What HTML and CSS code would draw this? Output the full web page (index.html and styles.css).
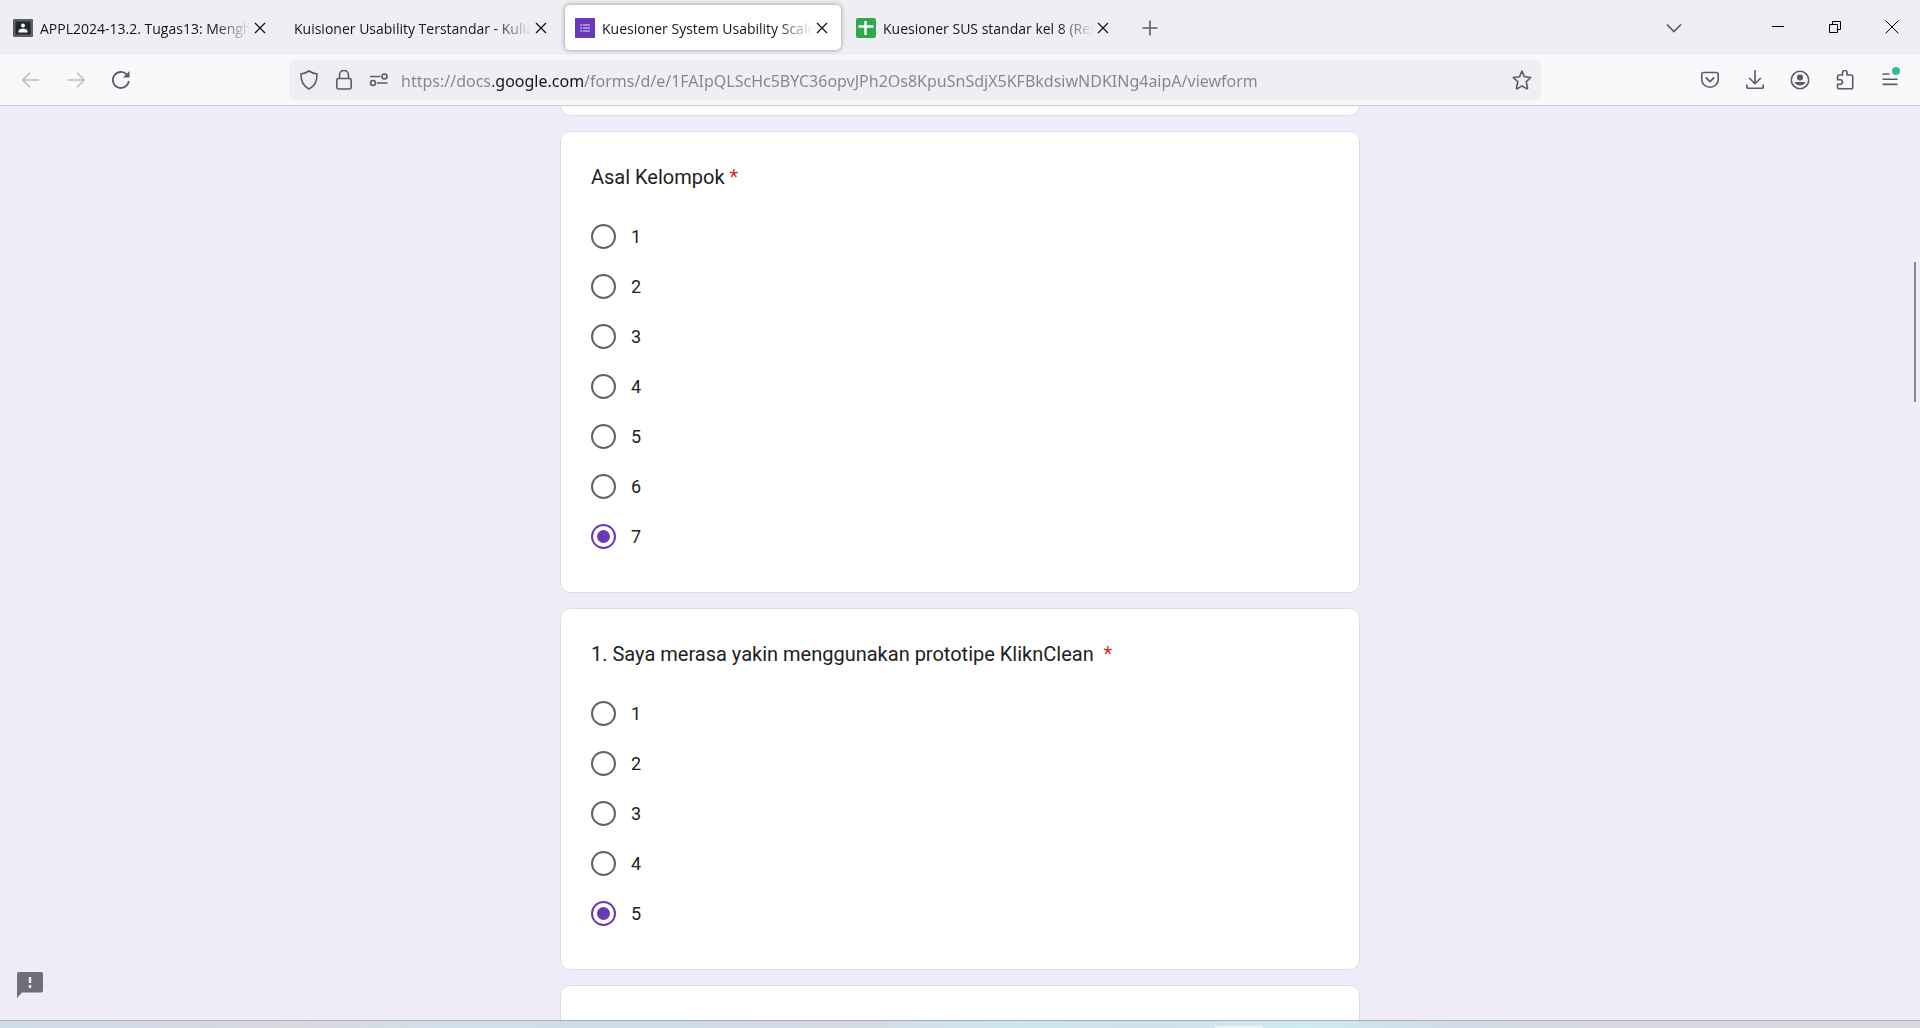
FILE: index.html
```html
<!DOCTYPE html>
<html lang="id">
<head>
<meta charset="utf-8">
<meta name="viewport" content="width=device-width, initial-scale=1">
<title>Kuesioner System Usability Scale</title>
<link rel="stylesheet" href="styles.css">
</head>
<body>
<header class="browser">
  <div class="titlebar">
    <div class="tabs">
      <div class="tab">
        <svg class="favicon" viewBox="0 0 20 20"><rect y="1" width="20" height="18" rx="1" fill="#5b6062"/><rect x="2.500" y="3.500" width="15" height="13" fill="#25282b"/><circle cx="10" cy="7.500" r="2" fill="#fff"/><path d="M5.500 14.500v-1.300c0-1.700 2.500-2.600 4.500-2.600s4.500.9 4.500 2.600v1.300z" fill="#fff"/></svg>
        <span class="tab-title">APPL2024-13.2. Tugas13: Mengh</span>
        <button class="tab-close" aria-label="Tutup tab"><svg viewBox="0 0 12 12"><path d="M1 1l10 10M11 1l-10 10"/></svg></button>
      </div>
      <div class="tab">
        <span class="tab-title">Kuisioner Usability Terstandar - Kulia</span>
        <button class="tab-close" aria-label="Tutup tab"><svg viewBox="0 0 12 12"><path d="M1 1l10 10M11 1l-10 10"/></svg></button>
      </div>
      <div class="tab tab-active">
        <svg class="favicon" viewBox="0 0 20 20"><rect width="20" height="20" fill="#673ab7"/><path d="M8 7h7M8 10h7M8 13h7" stroke="#e6def4" stroke-width="1.200"/><path d="M5.500 7h1.300M5.500 10h1.300M5.500 13h1.300" stroke="#e6def4" stroke-width="1.300"/></svg>
        <span class="tab-title">Kuesioner System Usability Scale</span>
        <button class="tab-close" aria-label="Tutup tab"><svg viewBox="0 0 12 12"><path d="M1 1l10 10M11 1l-10 10"/></svg></button>
      </div>
      <div class="tab">
        <svg class="favicon" viewBox="0 0 20 20"><rect width="20" height="20" rx="2" fill="#2fa84f"/><path d="M9.500 3v14M2.500 8.500h15" stroke="#fff" stroke-width="2.400"/></svg>
        <span class="tab-title">Kuesioner SUS standar kel 8 (Res</span>
        <button class="tab-close" aria-label="Tutup tab"><svg viewBox="0 0 12 12"><path d="M1 1l10 10M11 1l-10 10"/></svg></button>
      </div>
      <button class="icon-button" aria-label="Tab baru"><svg viewBox="0 0 20 20"><path d="M10 2.500v15M2.500 10h15"/></svg></button>
    </div>
    <button class="icon-button list-tabs" aria-label="Daftar tab"><svg viewBox="0 0 20 20"><path d="M3 6.500l7 7 7-7" stroke-width="1.700"/></svg></button>
    <div class="window-controls">
      <button aria-label="Kecilkan"><svg viewBox="0 0 14 14"><path d="M1 6.500h12"/></svg></button>
      <button aria-label="Pulihkan"><svg viewBox="0 0 14 14"><path d="M1.500 4.500h8v8h-8zM4.500 4.500v-3h8v8h-3"/></svg></button>
      <button aria-label="Tutup"><svg viewBox="0 0 14 14"><path d="M.5.5l13 13M13.500.5l-13 13"/></svg></button>
    </div>
  </div>
  <div class="toolbar">
    <button class="icon-button" disabled aria-label="Mundur"><svg viewBox="0 0 20 20"><path d="M18 10H2M9 2.800L1.800 10 9 17.200"/></svg></button>
    <button class="icon-button" disabled aria-label="Maju"><svg viewBox="0 0 20 20"><path d="M1.500 10H18M11 2.800l7.200 7.200-7.200 7.200"/></svg></button>
    <button class="icon-button" aria-label="Muat ulang"><svg viewBox="0 0 20 20"><path d="M17.800 11a8 8 0 1 1-2.200-6.600" stroke-width="1.800"/><path d="M18.500 1v6.500H12z" fill="currentColor" stroke="none"/></svg></button>
    <div class="spacer"></div>
    <div class="urlbar">
      <button class="url-icon" aria-label="Perlindungan"><svg viewBox="0 0 20 20"><path d="M10 1C7.500 2.700 4.800 3.600 2 4c-.2 6.500 2 12 8 15 6-3 8.200-8.500 8-15-2.800-.4-5.500-1.300-8-3z"/></svg></button>
      <button class="url-icon" aria-label="Keamanan"><svg viewBox="0 0 20 20"><rect x="2.800" y="8.500" width="14.400" height="10.500" rx="2"/><path d="M5.500 8.500V5a4.500 4.500 0 0 1 9 0v3.500"/></svg></button>
      <button class="url-icon" aria-label="Izin"><svg viewBox="0 0 20 20"><path d="M1 6.500h10.500M8 13h10.500"/><circle cx="15.500" cy="6.500" r="2.500"/><circle cx="4" cy="13" r="2.500"/></svg></button>
      <input class="url" type="text" aria-label="Alamat" spellcheck="false" value="https://docs.google.com/forms/d/e/1FAIpQLScHc5BYC36opvJPh2Os8KpuSnSdjX5KFBkdsiwNDKINg4aipA/viewform">
      <button class="url-icon" aria-label="Markahi"><svg viewBox="0 0 20 20"><path d="M10 1.200l2.500 5.600 6.300.7-4.600 4.200 1.300 6.300c.1.600-.4 1-1 .7L10 15.800l-4.500 2.900c-.6.300-1.100-.1-1-.7l1.300-6.300-4.600-4.200 6.300-.7z" stroke-linejoin="round"/></svg></button>
    </div>
    <div class="spacer"></div>
    <button class="icon-button" aria-label="Pocket"><svg viewBox="0 0 20 20"><path d="M3.500 2.500h13c1 0 1.700.8 1.700 1.700v5.300c0 4.400-3.600 7.700-8.200 7.700s-8.200-3.300-8.200-7.700V4.200c0-1 .8-1.700 1.700-1.700z"/><path d="M5.800 7.500L10 11.600l4.200-4.100" stroke-width="1.800"/></svg></button>
    <button class="icon-button" aria-label="Unduhan"><svg viewBox="0 0 20 20"><path d="M10 0v13.500M4.200 8L10 13.700 15.800 8M1.800 14.500v2a1.800 1.800 0 0 0 1.800 1.800h12.800a1.800 1.800 0 0 0 1.800-1.800v-2"/></svg></button>
    <button class="icon-button" aria-label="Akun"><svg viewBox="0 0 20 20"><circle cx="10" cy="10" r="8.700"/><circle cx="10" cy="7.500" r="3.100" fill="currentColor" stroke="none"/><path d="M4.500 12h11c-.8 2.300-3 3.600-5.500 3.600S5.300 14.300 4.500 12z" fill="currentColor" stroke="none"/></svg></button>
    <button class="icon-button" aria-label="Ekstensi"><svg viewBox="0 0 20 20"><path d="M7.500 5V2.800a2.300 2.300 0 0 1 4.600 0V5h4.200c.8 0 1.400.6 1.400 1.400v11c0 .8-.6 1.400-1.400 1.400H4c-.8 0-1.400-.6-1.400-1.400v-3.200h2.700a2.200 2.200 0 0 0 0-4.400H2.600V6.400C2.600 5.600 3.200 5 4 5z"/></svg></button>
    <button class="icon-button menu" aria-label="Menu"><svg viewBox="0 0 20 20"><path d="M2.500 4h7M2.500 9.200h15M2.500 14.400h15"/></svg><span class="badge"></span></button>
  </div>
</header>

<main class="page">
  <form class="form">
    <section class="card card-end"></section>

    <fieldset class="card">
      <legend class="question">Asal Kelompok <span class="required">*</span></legend>
      <div class="options">
        <label class="option"><input type="radio" name="kelompok">1</label>
        <label class="option"><input type="radio" name="kelompok">2</label>
        <label class="option"><input type="radio" name="kelompok">3</label>
        <label class="option"><input type="radio" name="kelompok">4</label>
        <label class="option"><input type="radio" name="kelompok">5</label>
        <label class="option"><input type="radio" name="kelompok">6</label>
        <label class="option"><input type="radio" name="kelompok" checked>7</label>
      </div>
    </fieldset>

    <fieldset class="card">
      <legend class="question">1. Saya merasa yakin menggunakan prototipe KliknClean &nbsp;<span class="required">*</span></legend>
      <div class="options">
        <label class="option"><input type="radio" name="q1">1</label>
        <label class="option"><input type="radio" name="q1">2</label>
        <label class="option"><input type="radio" name="q1">3</label>
        <label class="option"><input type="radio" name="q1">4</label>
        <label class="option"><input type="radio" name="q1" checked>5</label>
      </div>
    </fieldset>

    <section class="card"></section>
  </form>
  <button class="feedback" aria-label="Laporkan masalah"><svg viewBox="0 0 26 26"><path d="M2 0h22a2 2 0 0 1 2 2v16.500a2 2 0 0 1-2 2H5L0 26V2a2 2 0 0 1 2-2z" fill="#716d77"/><path d="M13 5v6M13 13v3" stroke="#efebf8" stroke-width="2.500"/></svg></button>
  <div class="scroll-thumb"></div>
</main>
<footer class="taskbar"><span class="task"></span></footer>
</body>
</html>
```
FILE: styles.css
```css
* { box-sizing: border-box; }

body {
  margin: 0;
  height: 100vh;
  display: flex;
  flex-direction: column;
  overflow: hidden;
  background: #f0ebf8;
  color: #202124;
  font-family: Roboto, "Liberation Sans", sans-serif;
}

button {
  margin: 0;
  padding: 0;
  border: 0;
  background: none;
  color: inherit;
  display: flex;
  align-items: center;
  justify-content: center;
}

svg { display: block; fill: none; stroke: currentColor; stroke-width: 1.6; }

/* Browser chrome */
.browser {
  flex: none;
  border-bottom: 1px solid #cccad3;
  background: #f9f9fb;
  color: #5b5b66;
  font-family: "Open Sans", "Noto Sans", sans-serif;
}

.titlebar {
  display: flex;
  height: 55px;
  padding-left: 3px;
  background: #efeef3;
}

.tabs {
  flex: 1;
  display: flex;
  align-items: center;
  gap: 5px;
  min-width: 0;
}

.tab {
  flex: 0 1 276px;
  min-width: 0;
  height: 45px;
  padding: 0 10px;
  display: flex;
  align-items: center;
  border-radius: 5px;
  color: #15141a;
}

.tab-active { background: #fff; box-shadow: 0 0 5px rgba(0, 0, 0, .4); }

.favicon { flex: none; width: 20px; height: 20px; margin-right: 7px; stroke: none; }

.tab-title {
  flex: 1;
  min-width: 0;
  padding-top: 2px;
  overflow: hidden;
  white-space: nowrap;
  font-size: 14px;
  line-height: 20px;
  mask-image: linear-gradient(to left, transparent, #000 36px);
}

.tab-close { flex: none; width: 18px; height: 18px; }
.tab-close svg { width: 12px; height: 12px; stroke-width: 1.3; }

.icon-button { flex: none; width: 45px; height: 45px; position: relative; }
.icon-button svg { width: 20px; height: 20px; }
.icon-button:disabled { color: #bdbcc3; }

.list-tabs { align-self: center; margin-right: 53px; }

.window-controls { display: flex; color: #000; }
.window-controls button { width: 57px; height: 53px; }
.window-controls svg { width: 14px; height: 14px; stroke-width: 1; }

.toolbar {
  display: flex;
  align-items: center;
  height: 50px;
  padding: 0 8px;
}

.spacer { flex: 0 1 146px; }

.urlbar {
  flex: 1 0 600px;
  display: flex;
  align-items: center;
  height: 40px;
  padding: 0 2px;
  border-radius: 5px;
  background: #efeef3;
}

.url-icon { flex: none; width: 35px; height: 40px; }
.url-icon svg { width: 20px; height: 20px; }

/* The registrable domain is darker than the rest of the address */
.url {
  flex: 1;
  min-width: 0;
  height: 40px;
  margin: 0 0 0 5px;
  padding: 2px 0 0;
  border: 0;
  outline: 0;
  font-family: "Noto Sans", "Open Sans", sans-serif;
  font-size: 16px;
  color: transparent;
  background: linear-gradient(to right, #85848b 92px, #15141a 92px, #15141a 182px, #85848b 182px);
  background-clip: text;
}

.badge {
  position: absolute;
  top: 9px;
  right: 12px;
  width: 8px;
  height: 8px;
  border-radius: 50%;
  background: #2fbf9b;
}

/* Form */
.page {
  flex: 1;
  min-height: 0;
  position: relative;
  overflow: hidden;
}

.form {
  display: flex;
  flex-direction: column;
  gap: 15px;
  width: 100%;
  max-width: 800px;
  margin: 0 auto;
}

.card {
  margin: 0;
  min-width: 0;
  padding: 30px 30px 43px;
  border: 1px solid #dadce0;
  border-radius: 10px;
  background: #fff;
}

.card-end {
  height: 10px;
  padding: 0;
  border-top: 0;
  border-radius: 0 0 10px 10px;
}

.question {
  float: left;
  width: 100%;
  padding: 0;
  margin-bottom: 32px;
  font-size: 20px;
  line-height: 30px;
}

.required { color: #d93025; }

.options {
  clear: both;
  display: flex;
  flex-direction: column;
  gap: 25px;
}

.option {
  display: flex;
  align-items: center;
  gap: 15px;
  font-size: 18px;
  line-height: 25px;
}

.option input {
  appearance: none;
  display: grid;
  place-items: center;
  width: 25px;
  height: 25px;
  margin: 0;
  border: 2px solid #5f6368;
  border-radius: 50%;
}

.option input:checked { border-color: #673ab7; }

.option input:checked::before {
  content: "";
  width: 13px;
  height: 13px;
  border-radius: 50%;
  background: #673ab7;
}

.feedback { position: absolute; left: 17px; bottom: 22px; }
.feedback svg { width: 26px; height: 26px; stroke: none; }

.scroll-thumb {
  position: absolute;
  top: 156px;
  right: 4px;
  width: 2px;
  height: 140px;
  background: #8b8791;
}

.taskbar {
  flex: none;
  display: flex;
  align-items: flex-end;
  height: 8px;
  padding-left: 63%;
  border-top: 1px solid #acabb5;
  background: linear-gradient(to right, #d0dde8, #d6d8e3 12%, #dcd9e1 15%, #d0dfe9 24%, #d0dde9 35%, #d5dae4 44%, #cde7ee 53%, #d0e1e8 60%, #cdebf0 68%, #d1dde8 75%, #d9d9e1 83%, #dcd8e0);
}

.task { width: 48px; height: 2px; margin-left: 5px; border-radius: 2px 2px 0 0; background: #e6f6f8; }
```
